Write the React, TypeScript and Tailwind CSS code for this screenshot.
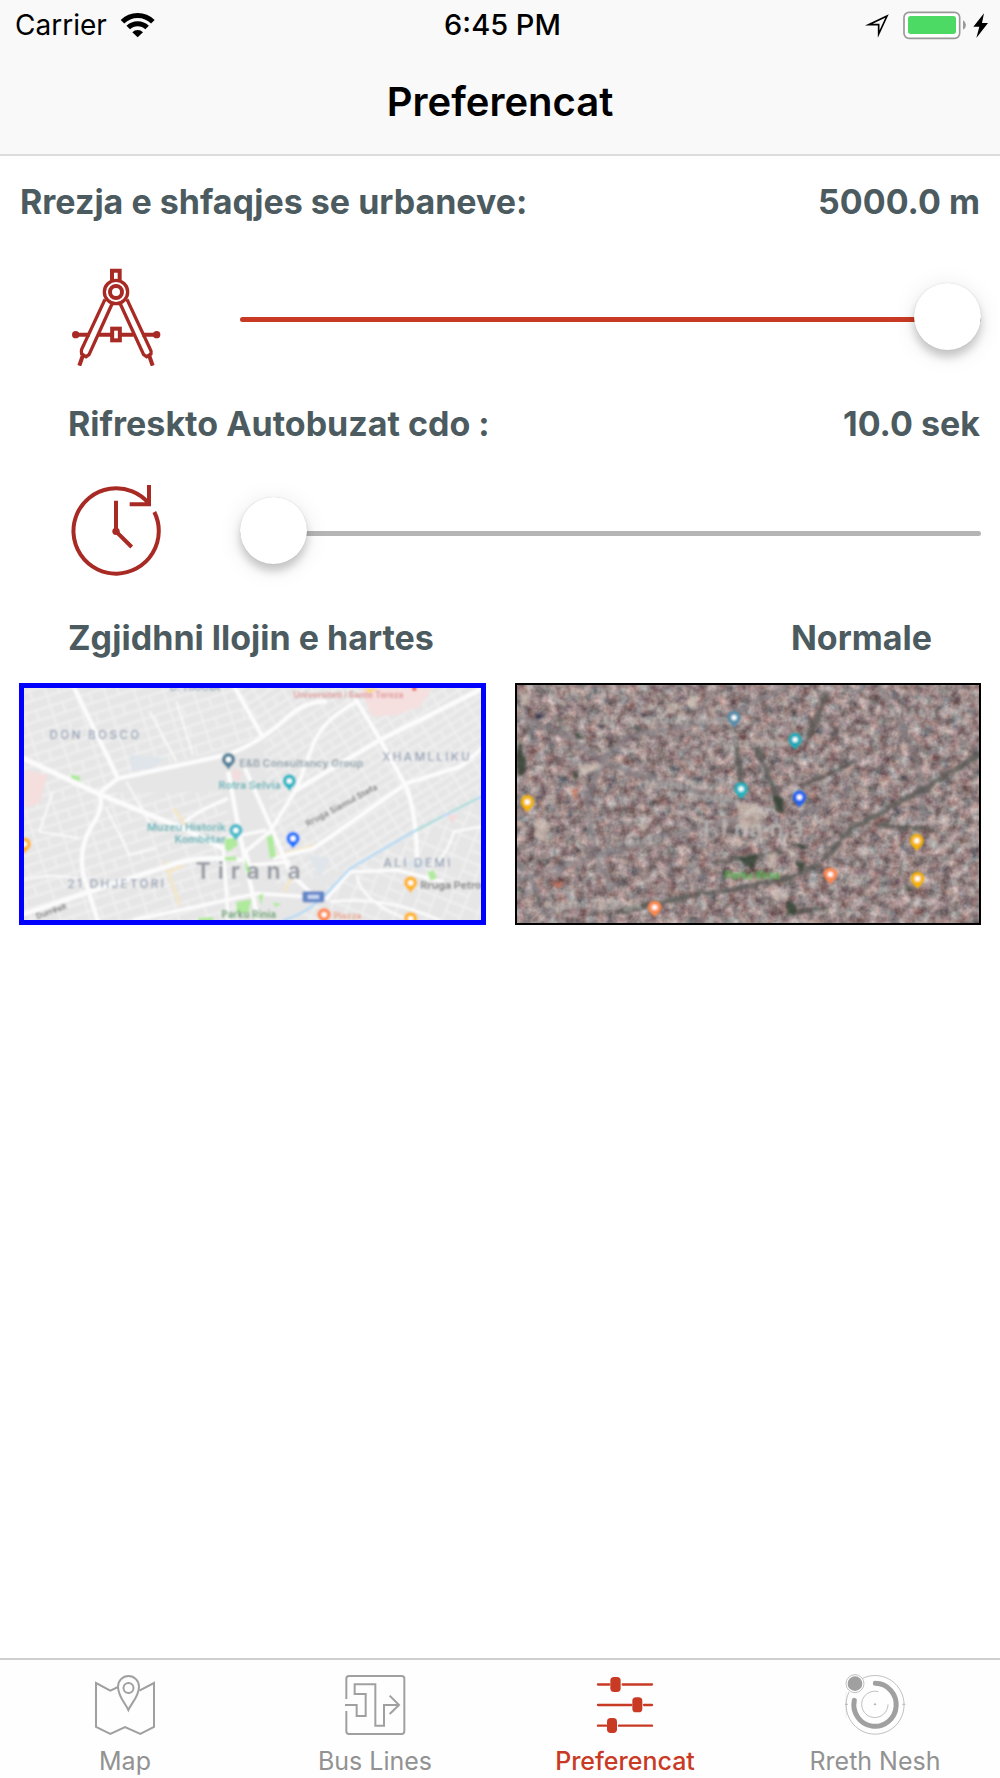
import { useState } from "react";
import type { CSSProperties, ReactNode } from "react";

function WifiIcon() {
  return (
    <svg viewBox="360 30 108 84" className="h-7 w-9" fill="none" stroke="#000" aria-hidden="true">
      <path d="M367.400 62.400A64.500 64.500 0 0 1 458.600 62.400" strokeWidth="15" />
      <path d="M384.700 79.700A40 40 0 0 1 441.300 79.700" strokeWidth="15" />
      <path d="M413 109L397 94A22 22 0 0 1 429 94Z" fill="#000" stroke="none" />
    </svg>
  );
}

function PowerIcons() {
  return (
    <svg viewBox="1092 27 378 90" className="h-[30px] w-[126px]" aria-hidden="true">
      <path d="M1161 45L1106 71L1136 71L1136 99Z" fill="none" stroke="#000" strokeWidth="5" strokeMiterlimit="8" />
      <rect x="1212" y="34" width="167" height="78" rx="15" fill="#fff" stroke="#999" strokeWidth="5" />
      <rect x="1224" y="45" width="144" height="54" rx="8" fill="#4cd964" />
      <path d="M1389 58Q1398 63 1398 72Q1398 81 1389 86Z" fill="#999" />
      <path d="M1452 37L1420 77H1438L1429 111L1464 66H1446Z" fill="#000" />
    </svg>
  );
}

function CompassIcon() {
  return (
    <svg viewBox="201 142 294 294" className="size-[98px] shrink-0" fill="none" stroke="#a82a24" strokeWidth="12" aria-hidden="true">
      <path d="M336 179V150H359V179" />
      <circle cx="348" cy="214" r="35" strokeWidth="10" />
      <circle cx="348" cy="214" r="18" />
      <path d="M315 236L245 386Q243 392 245 400L258 408L267 402L336 250" strokeWidth="10" />
      <path d="M381 236L451 386Q455 392 453 400L440 408L431 402L361 250" strokeWidth="10" />
      <path d="M248 406L238 435M448 406L458 435" />
      <path d="M226 342H269M295 342H335M361 342H401M427 342H470" />
      <rect x="336.500" y="324" width="23" height="35" />
      <circle cx="227" cy="342" r="11" fill="#a82a24" stroke="none" />
      <circle cx="470" cy="342" r="11" fill="#a82a24" stroke="none" />
    </svg>
  );
}

function RefreshClockIcon() {
  return (
    <svg viewBox="201 66 294 294" className="size-[98px] shrink-0" fill="none" stroke="#a82a24" strokeWidth="12" aria-hidden="true">
      <path d="M445 129A128 128 0 1 0 463 156" />
      <path d="M447 75V133H389" />
      <path d="M348 122V214L395 261" />
      <circle cx="348" cy="214" r="11" fill="#a82a24" stroke="none" />
    </svg>
  );
}

function MapIcon() {
  return (
    <svg viewBox="130 69 192 192" className="size-16" fill="none" stroke="currentColor" strokeWidth="6" aria-hidden="true">
      <path d="M205 111L182 122L139 99V231L182 252L226 231L272 252L313 231V99L269 122" />
      <path d="M236 180C227 160 205 139 205 110A31.500 32 0 0 1 268 110C268 139 245 160 236 180Z" />
      <circle cx="236.500" cy="114" r="15" />
    </svg>
  );
}

function RouteIcon() {
  return (
    <svg viewBox="880 69 192 192" className="size-16" fill="none" stroke="currentColor" strokeWidth="6" aria-hidden="true">
      <path d="M890 147V86Q890 78 898 78H1056Q1064 78 1064 86V244Q1064 252 1056 252H898Q890 252 890 244V183" />
      <path d="M886 165H921V198H948V132H915V103H977V227H1003V165H1048M1020 137L1048 165L1020 192" />
    </svg>
  );
}

function SlidersIcon() {
  return (
    <svg viewBox="159 69 192 192" className="size-16" fill="currentColor" aria-hidden="true">
      <path d="M174 103.500H208M248 103.500H336M174 165H274M312 165H336M174 227H198M237 227H336" stroke="currentColor" strokeWidth="7" strokeLinecap="round" />
      <rect x="211" y="81" width="31" height="45" rx="11" />
      <rect x="277" y="142" width="30" height="45" rx="11" />
      <rect x="201" y="204" width="30" height="45" rx="11" />
    </svg>
  );
}

function OrbitIcon() {
  return (
    <svg viewBox="908 69 192 192" className="size-16" fill="none" stroke="currentColor" aria-hidden="true">
      <path d="M967 85A87 88 0 1 1 926 126" strokeWidth="2" />
      <path d="M1014 125A39.500 39.500 0 1 0 1043 163" strokeWidth="2" />
      <path d="M1005 100A63.500 64.500 0 1 1 942 151" strokeWidth="15" strokeLinecap="round" />
      <circle cx="944" cy="101" r="27" strokeWidth="2" />
      <circle cx="944" cy="101" r="22" fill="currentColor" stroke="none" />
      <circle cx="1004" cy="163" r="2.500" fill="currentColor" />
      <path d="M917 125V204" strokeWidth="1" opacity=".5" />
      <path d="M914 163H923M1086 163H1095" strokeWidth="2" />
    </svg>
  );
}

function Pin({ x, y, color }: { x: number; y: number; color: string }) {
  return (
    <g>
      <path d={`M${x - 20} ${y}A20 20 0 0 1 ${x + 20} ${y}C${x + 20} ${y + 13} ${x + 7} ${y + 18} ${x} ${y + 31}C${x - 7} ${y + 18} ${x - 20} ${y + 13} ${x - 20} ${y}Z`} fill={color} />
      <circle cx={x} cy={y} r="8" fill="#fff" />
    </g>
  );
}

function StreetMap() {
  return (
    <svg viewBox="43 40 1368 695" preserveAspectRatio="xMidYMid slice" className="h-full w-full" aria-hidden="true">
      <defs>
        <filter id="street-soft" x="0" y="0" width="100%" height="100%">
          <feGaussianBlur stdDeviation="3.500" />
        </filter>
        <pattern id="blocks-a" width="84" height="62" patternUnits="userSpaceOnUse" patternTransform="rotate(-18)">
          <path d="M0 3H84M4 0V62M42 3V34M4 34H84" fill="none" stroke="#f3f3f3" strokeWidth="4" />
        </pattern>
        <pattern id="blocks-b" width="74" height="50" patternUnits="userSpaceOnUse" patternTransform="rotate(-32)">
          <path d="M0 3H74M4 0V50M42 26V50M4 26H74" fill="none" stroke="#f3f3f3" strokeWidth="4" />
        </pattern>
        <pattern id="blocks-c" width="92" height="66" patternUnits="userSpaceOnUse" patternTransform="rotate(22)">
          <path d="M0 3H92M4 0V66M50 3V66M4 36H50" fill="none" stroke="#f3f3f3" strokeWidth="4" />
        </pattern>
      </defs>
      <g filter="url(#street-soft)">
        <rect x="20" y="20" width="1420" height="740" fill="#e6e6e6" />
        <path d="M20 20H680L760 190L320 310L260 355L20 240Z" fill="url(#blocks-a)" />
        <path d="M680 20H1440V370L1010 580L800 640L760 190Z" fill="url(#blocks-b)" />
        <path d="M20 240L260 355L640 350L690 560V760H20Z" fill="url(#blocks-a)" />
        <path d="M1010 580L1440 370V760H820Z" fill="url(#blocks-c)" />
        <path d="M1050 40H1265L1230 95L1160 120L1085 125Z" fill="#f6dfdf" />
        <path d="M43 285L115 300L90 385L43 400Z" fill="#f5dede" />
        <path d="M668 280L695 290L690 320L668 312ZM1310 415L1345 425L1320 445Z" fill="#f3dcdc" />
        <path d="M360 240L470 250L430 280L365 290ZM1170 560L1260 550L1230 590ZM895 540L960 550L930 610Z" fill="#dfe5ea" />
        <path d="M490 400L530 450M465 560L510 690M480 590L520 570M790 545L920 510M850 600L820 650" stroke="#f5e6c6" strokeWidth="9" fill="none" />
        <g stroke="#fcfcfc" fill="none" strokeLinejoin="round">
          <path d="M185 20L325 310L270 355Q285 400 245 455Q205 525 222 600L272 760" strokeWidth="13" />
          <path d="M20 240L270 358L520 460Q570 485 640 520" strokeWidth="15" />
          <path d="M320 312L650 240Q740 210 830 130Q880 80 950 80" strokeWidth="13" />
          <path d="M665 20L760 190" strokeWidth="13" />
          <path d="M1035 70L1110 195L1190 340Q1220 430 1220 560" strokeWidth="13" />
          <path d="M1440 30L1110 195L850 350" strokeWidth="14" />
          <path d="M1440 200L1350 275L1190 325L910 520L790 550" strokeWidth="12" />
          <path d="M1040 80Q930 140 905 220L860 340L780 470L700 535" strokeWidth="11" />
          <path d="M655 290L690 480L745 735" strokeWidth="13" />
          <path d="M705 280L785 460L845 600L910 660" strokeWidth="12" />
          <path d="M525 440Q570 405 655 370M640 510L655 735M650 490L770 465M705 520L720 570L840 560" strokeWidth="10" />
          <path d="M20 725L240 650L500 565Q580 540 700 555" strokeWidth="13" />
          <path d="M370 735L740 655L900 665L950 670L1020 590L1160 585L1300 620" strokeWidth="10" />
          <path d="M1440 450L1330 470Q1310 540 1270 570M960 680Q1120 660 1290 735M1040 600Q1050 680 1200 735" strokeWidth="7" />
          <path d="M20 620Q120 590 200 610M130 350L90 470L210 490M290 400L360 540L440 520M350 320L430 460M420 110L500 260M500 80L550 240" strokeWidth="5" />
        </g>
        <path d="M1440 350L1200 475L1020 580L940 665Q880 720 820 735" fill="none" stroke="#b5daf5" strokeWidth="7" />
        <path d="M1400 370L1210 470" stroke="#a9dfd2" strokeWidth="5" strokeDasharray="90 28" />
        <g fill="#b0ea9d">
          <path d="M185 298L213 305L210 320L185 310ZM645 490L675 488L685 510L655 530L645 520ZM645 545H680V556H645ZM705 550L722 590L715 600L706 580ZM770 485L788 480L798 545L780 550ZM680 680L725 672L715 715L680 710ZM745 660L760 655L755 690ZM790 682L815 685L795 697ZM1252 590L1270 585L1280 610L1260 616ZM565 728L610 725V740H565Z" />
        </g>
        <g fontFamily="Inter, sans-serif" opacity=".88">
          <g fill="#8494ad" fontSize="35" fontWeight="500" className="tracking-[0.2em]">
            <text x="120" y="194">DON BOSCO</text>
            <text x="1116" y="257">XHAMLLIKU</text>
            <text x="1120" y="577">ALI DEMI</text>
            <text x="174" y="638">21 DHJETORI</text>
          </g>
          <text x="558" y="612" fill="#8d929c" fontSize="68" className="tracking-[0.3em]">Tirana</text>
          <text x="688" y="276" fill="#8da0aa" fontSize="32">E&amp;B Consultancy Group</text>
          <g fill="#5bb0b5" fontSize="32">
            <text x="626" y="341">Rotra Selvia</text>
            <text x="412" y="468">Muzeu Historik</text>
            <text x="494" y="505">Kombëtar</text>
          </g>
          <text x="850" y="71" fill="#df9292" fontSize="26">Universiteti i Sante Tereza</text>
          <text x="480" y="50" fill="#9aa7ba" fontSize="30">D. TIRANA</text>
          <text x="892" y="455" fill="#777" fontSize="26" transform="rotate(-28 892 455)">Rruga Siamul Stefa</text>
          <text x="84" y="732" fill="#666" fontSize="24" transform="rotate(-20 84 732)">Durrësit</text>
          <text x="1230" y="642" fill="#777" fontSize="32">Rruga Petro</text>
          <text x="634" y="729" fill="#599b61" fontSize="30">Parku Rinia</text>
          <text x="970" y="731" fill="#ed9b7c" fontSize="26">Piazza</text>
        </g>
        <rect x="877" y="648" width="66" height="34" rx="6" fill="#6486c8" />
        <path d="M893 665H927" stroke="#c8d6ef" strokeWidth="12" />
        <path d="M1060 42H1100L1080 54Z" fill="#f7da67" />
        <circle cx="1212" cy="42" r="7" fill="#ee5b5b" />
        <Pin x={656} y={254} color="#56849b" />
        <Pin x={838} y={318} color="#26b8c6" />
        <Pin x={678} y={466} color="#45bcca" />
        <Pin x={849} y={490} color="#1976ff" />
        <Pin x={45} y={507} color="#ffb51e" />
        <Pin x={1201} y={623} color="#ffb51e" />
        <Pin x={1201} y={730} color="#ffb51e" />
        <Pin x={942} y={718} color="#ff8d57" />
      </g>
    </svg>
  );
}

function SatelliteMap() {
  return (
    <svg viewBox="34 31 1387 715" preserveAspectRatio="xMidYMid slice" className="h-full w-full" aria-hidden="true">
      <defs>
        <filter id="rooftops" x="0" y="0" width="100%" height="100%" colorInterpolationFilters="sRGB">
          <feTurbulence type="fractalNoise" baseFrequency="0.033" numOctaves="3" seed="12" />
          <feColorMatrix values="0.560 0.180 0 0 0.225  0.580 0 0.100 0 0.190  0.540 0 0.160 0 0.180  0 0 0 0 1" />
          <feGaussianBlur stdDeviation="2" />
        </filter>
        <filter id="aerial-soft" x="0" y="0" width="100%" height="100%">
          <feGaussianBlur stdDeviation="3" />
        </filter>
        <filter id="patch-soft" x="-10%" y="-10%" width="120%" height="120%">
          <feTurbulence type="fractalNoise" baseFrequency="0.040" numOctaves="2" seed="4" result="n" />
          <feDisplacementMap in="SourceGraphic" in2="n" scale="20" xChannelSelector="R" yChannelSelector="G" />
          <feGaussianBlur stdDeviation="4" />
        </filter>
      </defs>
      <rect x="30" y="27" width="1395" height="723" fill="#958784" />
      <rect x="30" y="27" width="1395" height="723" filter="url(#rooftops)" />
      <g fill="none" filter="url(#patch-soft)">
        <g stroke="#817e83" opacity=".6">
          <path d="M36 125L180 180L290 260L420 310L560 345L700 390" strokeWidth="20" />
          <path d="M290 260L370 185L640 135L840 40" strokeWidth="17" />
          <path d="M290 260L245 380L265 530L320 650" strokeWidth="18" />
          <path d="M36 620L260 545L500 480L700 430" strokeWidth="16" />
          <path d="M1120 33L1190 160L1240 280L1250 440" strokeWidth="16" />
          <path d="M36 560L100 660L130 743M560 570L590 743M880 420L1040 350" strokeWidth="11" />
        </g>
        <g stroke="#555652" opacity=".75">
          <path d="M965 60L905 190M690 200L708 340M750 215L830 400" strokeWidth="18" />
          <path d="M885 335L1050 260" strokeWidth="13" />
          <path d="M1430 235L1240 350L1040 460L950 560" strokeWidth="17" />
          <path d="M330 712L580 660L830 615L950 570" strokeWidth="15" />
          <path d="M620 565L830 530M850 715L960 700M1110 450L1280 465" strokeWidth="12" />
        </g>
        <g fill="#344133" opacity=".85">
          <path d="M36 190L60 260L55 300H36ZM205 170L235 185L215 195ZM385 155L415 165L395 172ZM800 360L825 365L840 410L805 415ZM695 545L755 540L745 595ZM860 510L915 510L890 525ZM845 675L875 690L870 725L840 720ZM1195 620L1220 640L1205 655ZM200 290L220 310L205 320ZM870 560L900 570L880 590ZM90 650L110 690L95 680Z" />
          <path d="M85 115L120 125L95 132ZM400 115L430 122L415 135Z" fill="#241f35" />
        </g>
        <g fill="#d9cbc0" opacity=".6">
          <path d="M40 60L75 55L70 95L45 90ZM190 220L225 235L215 245ZM550 60L580 65L570 110L545 95ZM485 85L520 90L510 120L480 115ZM600 95L640 100L620 120ZM220 265L290 270L260 295L220 290ZM90 430L140 450L120 500L90 490ZM690 380L760 390L770 450L710 470ZM400 450L430 455L415 475ZM785 535L812 535L810 585L790 580ZM805 645L850 650L840 675L810 675ZM1270 480L1305 490L1285 505ZM1355 370L1380 380L1360 395ZM670 485L720 500L700 520Z" />
        </g>
        <g fill="#cc6f55" opacity=".8">
          <path d="M198 340L218 345L212 370L200 362ZM145 620L175 620L165 640L145 635ZM915 360L930 365L922 378Z" />
        </g>
      </g>
      <g filter="url(#aerial-soft)">
        <g fontFamily="Inter, sans-serif" fill="#c1c1bb" opacity=".7">
          <g fontSize="34" fontWeight="500" className="tracking-[0.2em]">
            <text x="130" y="67">DON BOSCO</text>
            <text x="1146" y="128">XHAMLLIKU</text>
            <text x="1150" y="450">ALI DEMI</text>
            <text x="204" y="511">21 DHJETORI</text>
          </g>
          <text x="580" y="488" fontSize="68" className="tracking-[0.3em]">Tirana</text>
          <text x="270" y="149" fontSize="34">E&amp;B Consultancy Group</text>
          <text x="642" y="216" fontSize="34">Rotra Selvia</text>
          <text x="418" y="342" fontSize="34">Muzeu Historik</text>
          <text x="524" y="381" fontSize="34">Kombëtar</text>
          <text x="1262" y="520" fontSize="27">Rruga Petro</text>
          <text x="1002" y="618" fontSize="28">Piazza</text>
          <text x="120" y="704" fontSize="34">Kopshti Zoologjik</text>
        </g>
        <text x="656" y="612" fontFamily="Inter, sans-serif" fontSize="31" fontWeight="500" fill="#43bd3c">Parku Rinia</text>
        <Pin x={685} y={129} color="#568fac" />
        <Pin x={868} y={195} color="#15aab8" />
        <Pin x={706} y={343} color="#20b5c2" />
        <Pin x={881} y={368} color="#2465f5" />
        <Pin x={65} y={382} color="#f9b500" />
        <Pin x={1233} y={498} color="#f9b500" />
        <Pin x={1235} y={612} color="#f9b500" />
        <Pin x={974} y={599} color="#ff8a50" />
        <Pin x={447} y={698} color="#ff8a50" />
      </g>
    </svg>
  );
}

type RangeProps = { id: string; min: number; max: number; value: number; onChange: (value: number) => void };

function Range({ id, min, max, value, onChange }: RangeProps) {
  const fill = { "--fill": `${((value - min) / (max - min)) * 100}%` } as CSSProperties;
  return (
    <input
      id={id}
      type="range"
      min={min}
      max={max}
      value={value}
      onChange={(e) => onChange(Number(e.target.value))}
      style={fill}
      className="mt-1 h-[73px] min-w-0 flex-1 cursor-pointer appearance-none bg-transparent [&::-webkit-slider-runnable-track]:h-[5px] [&::-webkit-slider-runnable-track]:rounded-full [&::-webkit-slider-runnable-track]:bg-[linear-gradient(to_right,#c93a24_var(--fill),#b5b5b5_var(--fill))] [&::-webkit-slider-thumb]:-mt-[34px] [&::-webkit-slider-thumb]:size-[67px] [&::-webkit-slider-thumb]:appearance-none [&::-webkit-slider-thumb]:rounded-full [&::-webkit-slider-thumb]:bg-white [&::-webkit-slider-thumb]:shadow-[0_0_1px_rgba(0,0,0,0.2),0_7px_8px_rgba(0,0,0,0.18),0_4px_24px_rgba(0,0,0,0.1)]"
    />
  );
}

function Tab({ label, active, children }: { label: string; active?: boolean; children: ReactNode }) {
  return (
    <a
      href="#"
      aria-current={active ? "page" : undefined}
      className={`flex flex-1 flex-col items-center gap-2 pt-[13px] text-[25px] leading-8 ${active ? "font-medium text-[#c93a24]" : "text-[#929292]"}`}
    >
      <span className={active ? "text-[#c93a24]" : "text-[#a0a0a0]"}>{children}</span>
      <span>{label}</span>
    </a>
  );
}

export default function App() {
  const [radius, setRadius] = useState(5000);
  const [refresh, setRefresh] = useState(10);
  const [mapType, setMapType] = useState<"normal" | "satellite">("normal");

  return (
    <div className="flex min-h-screen flex-col bg-white font-['Inter',sans-serif]">
      <header className="border-b-2 border-[#dcdcdc] bg-[#f9f9f9] text-black">
        <div className="grid h-[50px] grid-cols-[1fr_auto_1fr] items-center pr-[10px] pl-[15px] text-[28px] leading-9">
          <div className="flex items-center gap-[13px]">
            <span>Carrier</span>
            <WifiIcon />
          </div>
          <span className="text-[29px] font-medium">6:45 PM</span>
          <div className="flex justify-end">
            <PowerIcons />
          </div>
        </div>
        <h1 className="flex h-[104px] items-center justify-center text-[40px] font-semibold">Preferencat</h1>
      </header>

      <main className="flex-1 px-[19px] pt-[26px] text-[34px] leading-10 font-bold text-[#4c5b60]">
        <div className="flex justify-between px-px">
          <label htmlFor="radius">Rrezja e shfaqjes se urbaneve:</label>
          <output htmlFor="radius">{radius.toFixed(1)} m</output>
        </div>
        <div className="mt-[46px] flex items-center gap-[75px] pl-12">
          <CompassIcon />
          <Range id="radius" min={500} max={5000} value={radius} onChange={setRadius} />
        </div>
        <div className="mt-[38px] flex justify-between pr-px pl-[49px]">
          <label htmlFor="refresh">Rifreskto Autobuzat cdo :</label>
          <output htmlFor="refresh">{refresh.toFixed(1)} sek</output>
        </div>
        <div className="mt-[38px] flex items-center gap-[75px] pl-12">
          <RefreshClockIcon />
          <Range id="refresh" min={10} max={60} value={refresh} onChange={setRefresh} />
        </div>
        <div className="mt-[38px] flex justify-between px-[49px]">
          <h2>Zgjidhni llojin e hartes</h2>
          <span>{mapType === "normal" ? "Normale" : "Satelitore"}</span>
        </div>
        <div className="mt-[25px] grid grid-cols-2 gap-[29px]">
          <button
            type="button"
            aria-label="Normale"
            aria-pressed={mapType === "normal"}
            onClick={() => setMapType("normal")}
            className={`aspect-[466/242] overflow-hidden ${mapType === "normal" ? "border-[5px] border-[#0000ff]" : "border-2 border-black"}`}
          >
            <StreetMap />
          </button>
          <button
            type="button"
            aria-label="Satelitore"
            aria-pressed={mapType === "satellite"}
            onClick={() => setMapType("satellite")}
            className={`aspect-[466/242] overflow-hidden ${mapType === "satellite" ? "border-[5px] border-[#0000ff]" : "border-2 border-black"}`}
          >
            <SatelliteMap />
          </button>
        </div>
      </main>

      <nav className="flex h-[120px] border-t-2 border-[#cfcfcf] bg-[#fefefe]">
        <Tab label="Map">
          <MapIcon />
        </Tab>
        <Tab label="Bus Lines">
          <RouteIcon />
        </Tab>
        <Tab label="Preferencat" active>
          <SlidersIcon />
        </Tab>
        <Tab label="Rreth Nesh">
          <OrbitIcon />
        </Tab>
      </nav>
    </div>
  );
}
